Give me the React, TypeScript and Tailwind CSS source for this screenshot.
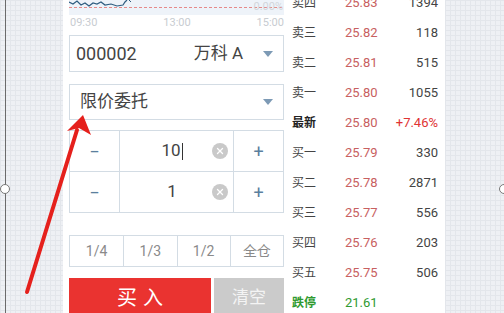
import { X } from 'lucide-react';

const GRID_BG =
  'bg-[#eef0f4] bg-[linear-gradient(#e3e6eb_1px,transparent_1px),linear-gradient(90deg,#e3e6eb_1px,transparent_1px)] bg-[size:5px_5px]';

const BOOK = [
  { label: '卖四', price: '25.83', vol: '1394' },
  { label: '卖三', price: '25.82', vol: '118' },
  { label: '卖二', price: '25.81', vol: '515' },
  { label: '卖一', price: '25.80', vol: '1055' },
  { label: '最新', price: '25.80', vol: '+7.46%', kind: 'last' },
  { label: '买一', price: '25.79', vol: '330' },
  { label: '买二', price: '25.78', vol: '2871' },
  { label: '买三', price: '25.77', vol: '556' },
  { label: '买四', price: '25.76', vol: '203' },
  { label: '买五', price: '25.75', vol: '506' },
  { label: '跌停', price: '21.61', vol: '', kind: 'limit' },
];

function Caret() {
  return (
    <svg width="10" height="6" viewBox="0 0 10 6" className="text-[#7d9ab5]">
      <path d="M0 0h10L5 6z" fill="currentColor" />
    </svg>
  );
}

function Stepper({ value, cursor }: { value: string; cursor?: boolean }) {
  return (
    <div className="flex h-10 items-stretch">
      <div className="flex w-[49px] items-center justify-center text-[18px] text-[#5b7f9e]">−</div>
      <div className="flex flex-1 items-center border-x border-[#d3dce4]">
        <div className="flex flex-1 items-center justify-center pl-3 text-[17px] text-[#444]">
          {value}
          {cursor ? <span className="ml-px h-[17px] w-px bg-[#333]" /> : null}
        </div>
        <div className="mr-[5px] flex h-[16px] w-[16px] items-center justify-center rounded-full bg-[#c9c9c9]">
          <X className="h-[10px] w-[10px] text-white" strokeWidth={3} />
        </div>
      </div>
      <div className="flex w-[49px] items-center justify-center text-[18px] text-[#5b7f9e]">+</div>
    </div>
  );
}

export default function App() {
  return (
    <div className="relative flex h-[313px] w-[504px] overflow-hidden bg-white font-['Roboto','Noto_Sans_CJK_SC',sans-serif]">
      <div className={`w-[63px] shrink-0 ${GRID_BG}`}>
        <div className="ml-[5px] h-full border-l border-[#6b6b6b]" />
      </div>

      <div className="flex w-[382px] shrink-0 bg-white">
        <div className="w-[227px] px-[6px]">
          <div className="relative h-[15px] bg-[#eef3f9]">
            <svg width="215" height="15" className="absolute inset-0">
              <line x1="0" y1="7.5" x2="215" y2="7.5" stroke="#e58a8a" strokeWidth="1" strokeDasharray="3 2" />
              <polyline
                points="0,2 4,4 8,1 12,5 16,3 20,6 24,3 28,4 32,2 36,5 42,4 48,6 54,5 56,2 58,0"
                fill="none"
                stroke="#2f5d80"
                strokeWidth="1.2"
              />
              <polyline points="60,0 62,2" fill="none" stroke="#2f5d80" strokeWidth="1" />
            </svg>
            <span className="absolute right-[1px] top-[1px] text-[11px] leading-none text-[#d2d6db]">0.00%</span>
          </div>
          <div className="flex h-[16px] items-center justify-between text-[11px] text-[#c8ccd1]">
            <span className="pl-[1px]">09:30</span>
            <span>13:00</span>
            <span>15:00</span>
          </div>

          <div className="mt-[4px] flex h-[37px] items-center border border-[#d3dce4] pl-[6px] pr-[10px]">
            <span className="text-[18px] text-[#444]">000002</span>
            <span className="ml-auto mr-[20px] text-[17px] text-[#444]">万科 A</span>
            <Caret />
          </div>

          <div className="mt-[12px] flex h-[36px] items-center border border-[#d3dce4] pl-[10px] pr-[10px]">
            <span className="text-[17px] text-[#444]">限价委托</span>
            <span className="ml-auto">
              <Caret />
            </span>
          </div>

          <div className="mt-[10px] border border-[#d3dce4]">
            <Stepper value="10" cursor />
            <div className="border-t border-[#d3dce4]">
              <Stepper value="1" />
            </div>
          </div>

          <div className="mt-[22px] grid h-[32px] grid-cols-4 border border-[#d3dce4] text-[14px] text-[#8a8a8a]">
            <div className="flex items-center justify-center">1/4</div>
            <div className="flex items-center justify-center border-l border-[#d3dce4]">1/3</div>
            <div className="flex items-center justify-center border-l border-[#d3dce4]">1/2</div>
            <div className="flex items-center justify-center border-l border-[#d3dce4]">全仓</div>
          </div>

          <div className="mt-[11px] flex h-[40px] gap-[3px]">
            <div className="flex w-[142px] items-center justify-center bg-[#ea3330] pl-[6px] text-[20px] tracking-[6px] text-white">
              买入
            </div>
            <div className="flex flex-1 items-center justify-center bg-[#cbcbcb] text-[17px] text-[#f4f4f4]">
              清空
            </div>
          </div>
        </div>

        <div className="mt-[-12px] flex-1 pl-[2px] pr-[7px]">
          {BOOK.map((row) => (
            <div key={row.label} className="flex h-[30px] items-center text-[12px]">
              <span
                className={`w-[53px] ${
                  row.kind === 'last'
                    ? 'font-bold text-[#222]'
                    : row.kind === 'limit'
                      ? 'font-bold text-[#2f9a2f]'
                      : 'text-[#444]'
                }`}
              >
                {row.label}
              </span>
              <span className={`text-[13px] ${row.kind === 'limit' ? 'text-[#2f9a2f]' : 'text-[#c86060]'}`}>
                {row.price}
              </span>
              <span
                className={`ml-auto text-[13px] ${row.kind === 'last' ? 'text-[#e03333]' : 'text-[#444]'}`}
              >
                {row.vol}
              </span>
            </div>
          ))}
        </div>
      </div>

      <div className={`flex-1 ${GRID_BG}`} />

      <div className="absolute left-0 top-[184px] h-[10px] w-[10px] rounded-full border border-[#777] bg-white" />
      <div className="absolute left-[499px] top-[184px] h-[10px] w-[10px] rounded-full border border-[#777] bg-white" />

      <svg className="pointer-events-none absolute inset-0" width="504" height="313">
        <line x1="27" y1="292" x2="77" y2="130" stroke="#e5201c" strokeWidth="4" strokeLinecap="round" />
        <polygon points="83,115 91,135 79,128 67,131" fill="#e5201c" />
      </svg>
    </div>
  );
}
